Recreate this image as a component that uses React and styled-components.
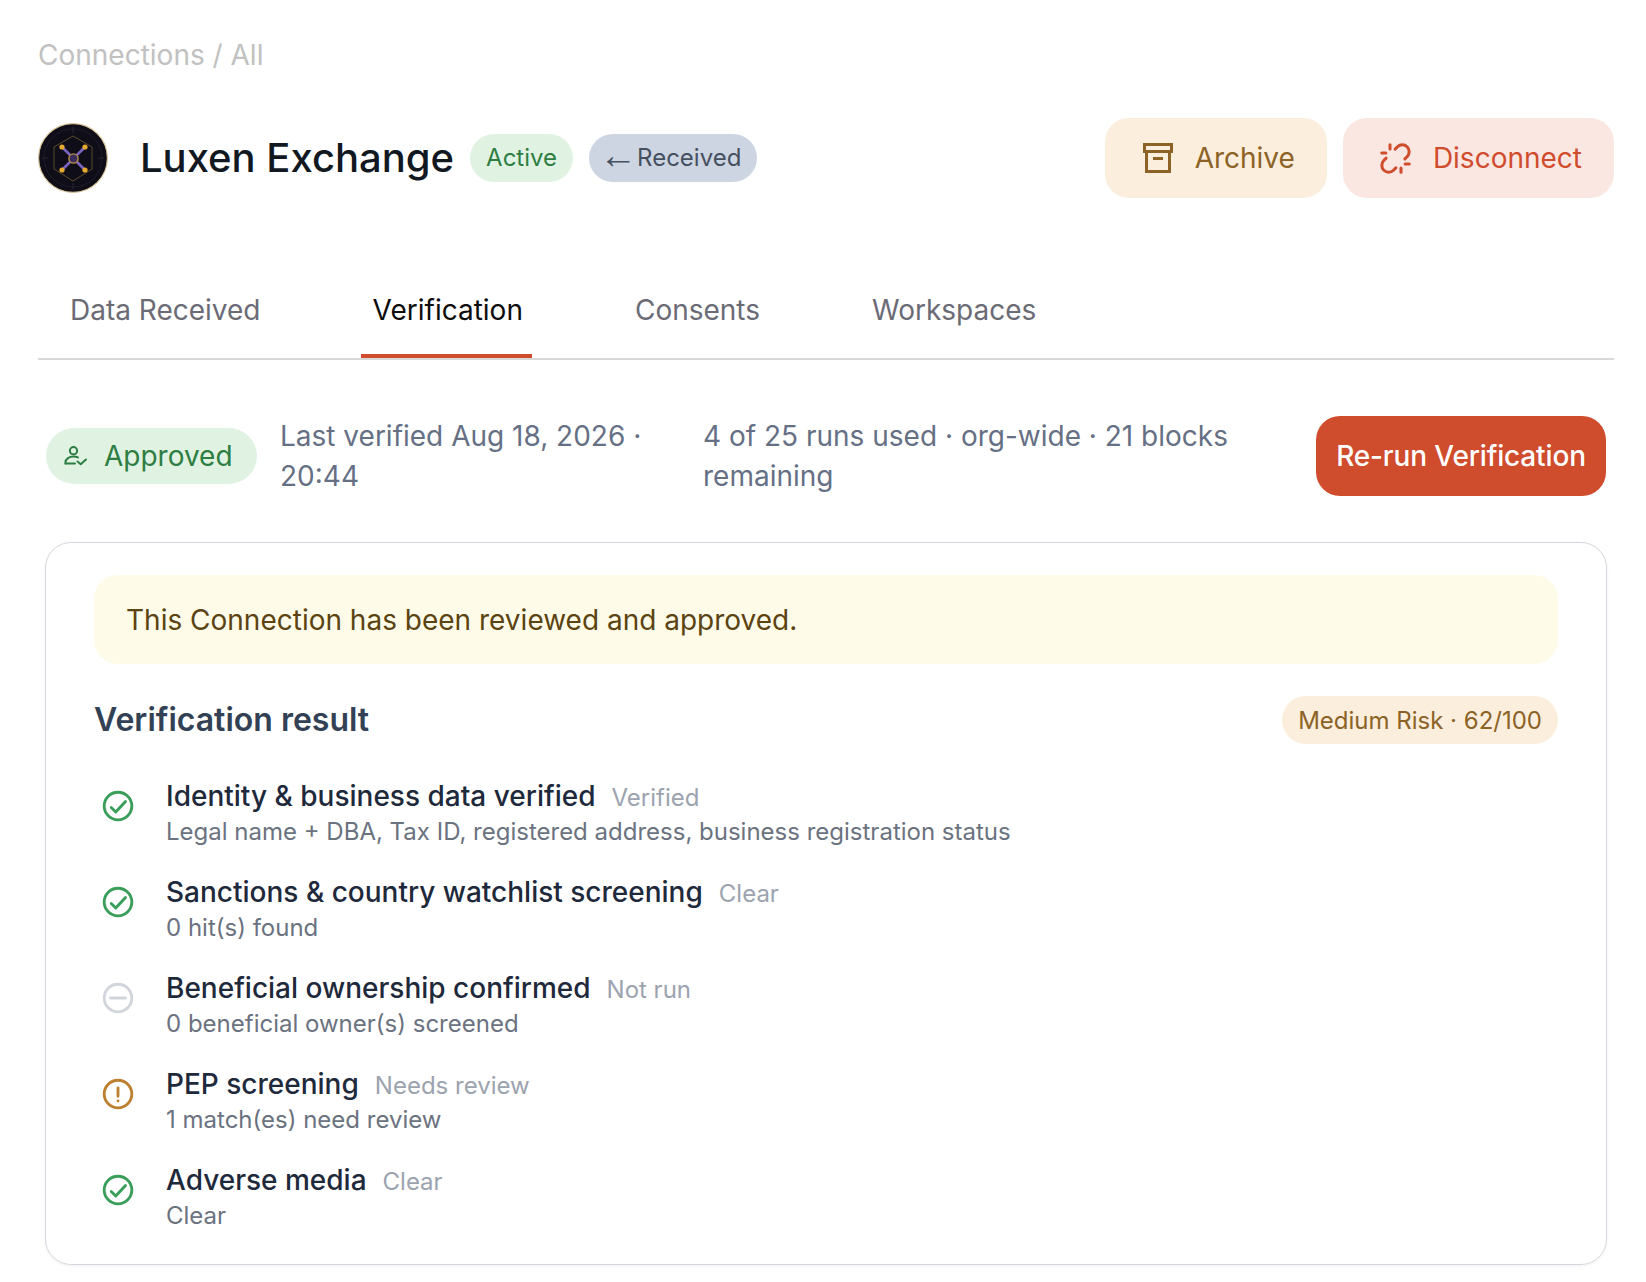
import React from "react";
import styled, { createGlobalStyle } from "styled-components";
import { Unlink } from "lucide-react";

const GlobalStyle = createGlobalStyle`
  html, body {
    margin: 0;
    background: #fff;
    font-family: Inter, "Noto Sans", sans-serif;
  }
  * {
    box-sizing: border-box;
  }
`;

const Page = styled.div`
  width: 1646px;
  height: 1282px;
  padding: 36px 32px 0 38px;
  overflow: hidden;
`;

const Breadcrumb = styled.div`
  font-size: 28px;
  line-height: 38px;
  color: #c1c1c1;
`;

const Header = styled.div`
  display: flex;
  align-items: center;
  margin-top: 44px;
  height: 80px;
`;

const Logo = styled.svg`
  width: 70px;
  height: 70px;
  flex: none;
`;

const Title = styled.h1`
  margin: 0 16px 0 32px;
  font-size: 40px;
  line-height: 48px;
  font-weight: 500;
  color: #11181f;
`;

const Badge = styled.span`
  display: inline-flex;
  align-items: center;
  height: 48px;
  padding: 0 16px;
  margin-right: 16px;
  border-radius: 24px;
  font-size: 24px;
  line-height: 30px;
  background: ${props => props.bg};
  color: ${props => props.color};
`;

const BadgeArrow = styled.span`
  margin: 0 0 6px -6px;
  font-family: "Liberation Sans", sans-serif;
  font-size: 38px;
  line-height: 30px;
`;

const Actions = styled.div`
  display: flex;
  gap: 16px;
  margin-left: auto;
`;

const ActionButton = styled.button`
  display: flex;
  align-items: center;
  gap: 19px;
  height: 80px;
  padding: 0 32px 0 35px;
  border: 0;
  border-radius: 24px;
  font-family: inherit;
  font-size: 28px;
  background: ${props => props.bg};
  color: ${props => props.color};
`;

const UnlinkIcon = styled(Unlink)`
  margin: 0 1.5px;
`;

const Tabs = styled.div`
  display: flex;
  gap: 91px;
  margin-top: 68px;
  padding-left: 20px;
  border-bottom: 2px solid #d9d9d9;
`;

const Tab = styled.div`
  height: 92px;
  padding: 25px 9px 0 12px;
  font-size: 28px;
  line-height: 38px;
  color: ${props => (props.active ? "#0d0d0d" : "#6b6b76")};
  border-bottom: 4px solid ${props => (props.active ? "#cf4c2d" : "transparent")};
`;

const StatusRow = styled.div`
  display: flex;
  align-items: center;
  margin-top: 56px;
  padding: 0 8px;
  height: 80px;
`;

const ApprovedPill = styled.span`
  display: flex;
  align-items: center;
  gap: 12px;
  flex: none;
  width: 211px;
  height: 56px;
  padding-left: 14px;
  border-radius: 28px;
  font-size: 28px;
  background: #e0f3e3;
  color: #2e7d42;
`;

const StatusText = styled.div`
  width: ${props => props.width}px;
  margin-left: ${props => props.offset}px;
  font-size: 28px;
  line-height: 40px;
  color: #667085;
`;

const RerunButton = styled.button`
  width: 290px;
  height: 80px;
  margin-left: auto;
  border: 0;
  border-radius: 24px;
  font-family: inherit;
  font-size: 28px;
  font-weight: 500;
  letter-spacing: -0.15px;
  background: #cf4c2d;
  color: #fff;
`;

const Card = styled.div`
  width: 1562px;
  margin: 46px 0 0 7px;
  padding: 32px 48px 30px;
  border: 1px solid #d4d8de;
  border-radius: 26px;
  box-shadow: 0 1px 3px rgba(16, 24, 40, 0.06);
`;

const Banner = styled.div`
  display: flex;
  align-items: center;
  height: 89px;
  padding: 0 32px;
  border-radius: 24px;
  font-size: 28px;
  background: #fefce8;
  color: #5b4312;
`;

const ResultHeader = styled.div`
  display: flex;
  align-items: center;
  justify-content: space-between;
  margin-top: 31px;
  height: 48px;
`;

const ResultTitle = styled.h2`
  margin: 0;
  font-size: 32px;
  font-weight: 600;
  color: #334155;
`;

const RiskPill = styled.span`
  display: flex;
  align-items: center;
  height: 48px;
  margin-top: 2px;
  padding: 0 16px;
  border-radius: 24px;
  font-size: 24px;
  background: #fbeedc;
  color: #8c6226;
`;

const Checks = styled.ul`
  list-style: none;
  margin: 35px 0 0;
  padding: 0;
  display: flex;
  flex-direction: column;
  gap: 24px;
`;

const Check = styled.li`
  display: flex;
  align-items: flex-start;
  gap: 30px;
  padding-left: 6px;
`;

const StatusSvg = styled.svg`
  width: 36px;
  height: 36px;
  flex: none;
  margin-top: 10px;
  fill: none;
  stroke: ${props => props.color};
  stroke-width: 1.9;
  stroke-linecap: round;
  stroke-linejoin: round;
`;

const CheckTop = styled.div`
  display: flex;
  align-items: baseline;
  gap: 16px;
  height: 36px;
  line-height: 36px;
`;

const CheckName = styled.span`
  font-size: 28px;
  font-weight: 500;
  color: #1e293b;
`;

const CheckTag = styled.span`
  font-size: 24px;
  color: #9ca3af;
`;

const CheckDetail = styled.div`
  font-size: 24px;
  line-height: 36px;
  color: #6b7280;
`;

const StatusIcon = ({ status }) => {
  if (status === "none") {
    return (
      <StatusSvg viewBox="0 0 24 24" color="#d1d5db">
        <circle cx="12" cy="12" r="9.2" />
        <path d="M7 12h10" />
      </StatusSvg>
    );
  }
  if (status === "warn") {
    return (
      <StatusSvg viewBox="0 0 24 24" color="#bd8030">
        <circle cx="12" cy="12" r="9.2" />
        <path d="M12 8v5.5M12 16.6v.01" />
      </StatusSvg>
    );
  }
  return (
    <StatusSvg viewBox="0 0 24 24" color="#3a9e5b">
      <circle cx="12" cy="12" r="9.2" />
      <path d="M7.5 13l3 3 6.5-7" />
    </StatusSvg>
  );
};

const checks = [
  { status: "ok", name: "Identity & business data verified", tag: "Verified", detail: "Legal name + DBA, Tax ID, registered address, business registration status" },
  { status: "ok", name: "Sanctions & country watchlist screening", tag: "Clear", detail: "0 hit(s) found" },
  { status: "none", name: "Beneficial ownership confirmed", tag: "Not run", detail: "0 beneficial owner(s) screened" },
  { status: "warn", name: "PEP screening", tag: "Needs review", detail: "1 match(es) need review" },
  { status: "ok", name: "Adverse media", tag: "Clear", detail: "Clear" },
];

const LuxenLogo = () => (
  <Logo viewBox="0 0 70 70">
    <circle cx="35" cy="35" r="34.4" fill="#0e0d18" stroke="#d9c49a" strokeWidth="1.2" />
    <circle cx="35" cy="35" r="29" fill="none" stroke="#1d1c2a" strokeWidth="1" />
    <path d="M35 4v6M35 60v6M4 35h6M60 35h6" stroke="#2a2936" strokeWidth="1" />
    <path d="M35 13 L54 24 V46 L35 58 L16 46 V24 Z" fill="none" stroke="#6f5a2e" strokeWidth="0.8" />
    <path d="M24 24 L47 47 M47 24 L24 47" stroke="#7a62bf" strokeWidth="2.6" />
    <circle cx="35.5" cy="35.5" r="4.6" fill="#3a2f5c" stroke="#b98f46" strokeWidth="1.4" />
    <circle cx="24" cy="24" r="2.6" fill="#e5a92e" />
    <circle cx="47" cy="24" r="2.6" fill="#e5a92e" />
    <circle cx="24" cy="47" r="2.6" fill="#e5a92e" />
    <circle cx="47" cy="47" r="2.6" fill="#e5a92e" />
  </Logo>
);

const ArchiveIcon = () => (
  <svg width="36" height="36" viewBox="0 0 36 36" fill="none" stroke="#8c6226" strokeWidth="3">
    <rect x="4.5" y="4.5" width="27" height="7" />
    <path d="M6.5 11.5 V31.5 H29.5 V11.5" />
    <path d="M13 18.5 H23" />
  </svg>
);

const ApprovedIcon = () => (
  <svg width="32" height="32" viewBox="0 0 32 32" fill="none" stroke="#2e7d42" strokeWidth="2" strokeLinecap="round" strokeLinejoin="round">
    <circle cx="13.5" cy="10.7" r="3.6" />
    <path d="M5.5 23.5v-1.2c0-3.6 4-5.8 8-5.8 1.6 0 3.1.3 4.5.9" />
    <path d="M5.5 23.5H15" />
    <path d="M17.5 21.5l3.2 2.7 5.3-4.7" />
  </svg>
);

export default function App() {
  return (
    <Page>
      <GlobalStyle />
      <Breadcrumb>Connections / All</Breadcrumb>
      <Header>
        <LuxenLogo />
        <Title>Luxen Exchange</Title>
        <Badge bg="#e0f3e3" color="#2e7d42">Active</Badge>
        <Badge bg="#cdd5e3" color="#46505f">
          <BadgeArrow>←</BadgeArrow>
          Received
        </Badge>
        <Actions>
          <ActionButton bg="#fbeedc" color="#8c6226">
            <ArchiveIcon />
            Archive
          </ActionButton>
          <ActionButton bg="#fbe7e2" color="#cf4c2d">
            <UnlinkIcon size={33} strokeWidth={2.2} />
            Disconnect
          </ActionButton>
        </Actions>
      </Header>
      <Tabs>
        <Tab>Data Received</Tab>
        <Tab active>Verification</Tab>
        <Tab>Consents</Tab>
        <Tab>Workspaces</Tab>
      </Tabs>
      <StatusRow>
        <ApprovedPill>
          <ApprovedIcon />
          Approved
        </ApprovedPill>
        <StatusText width={399} offset={23}>Last verified Aug 18, 2026 · 20:44</StatusText>
        <StatusText width={560} offset={24}>4 of 25 runs used · org-wide · 21 blocks remaining</StatusText>
        <RerunButton>Re-run Verification</RerunButton>
      </StatusRow>
      <Card>
        <Banner>This Connection has been reviewed and approved.</Banner>
        <ResultHeader>
          <ResultTitle>Verification result</ResultTitle>
          <RiskPill>Medium Risk · 62/100</RiskPill>
        </ResultHeader>
        <Checks>
          {checks.map(item => (
            <Check key={item.name}>
              <StatusIcon status={item.status} />
              <div>
                <CheckTop>
                  <CheckName>{item.name}</CheckName>
                  <CheckTag>{item.tag}</CheckTag>
                </CheckTop>
                <CheckDetail>{item.detail}</CheckDetail>
              </div>
            </Check>
          ))}
        </Checks>
      </Card>
    </Page>
  );
}
